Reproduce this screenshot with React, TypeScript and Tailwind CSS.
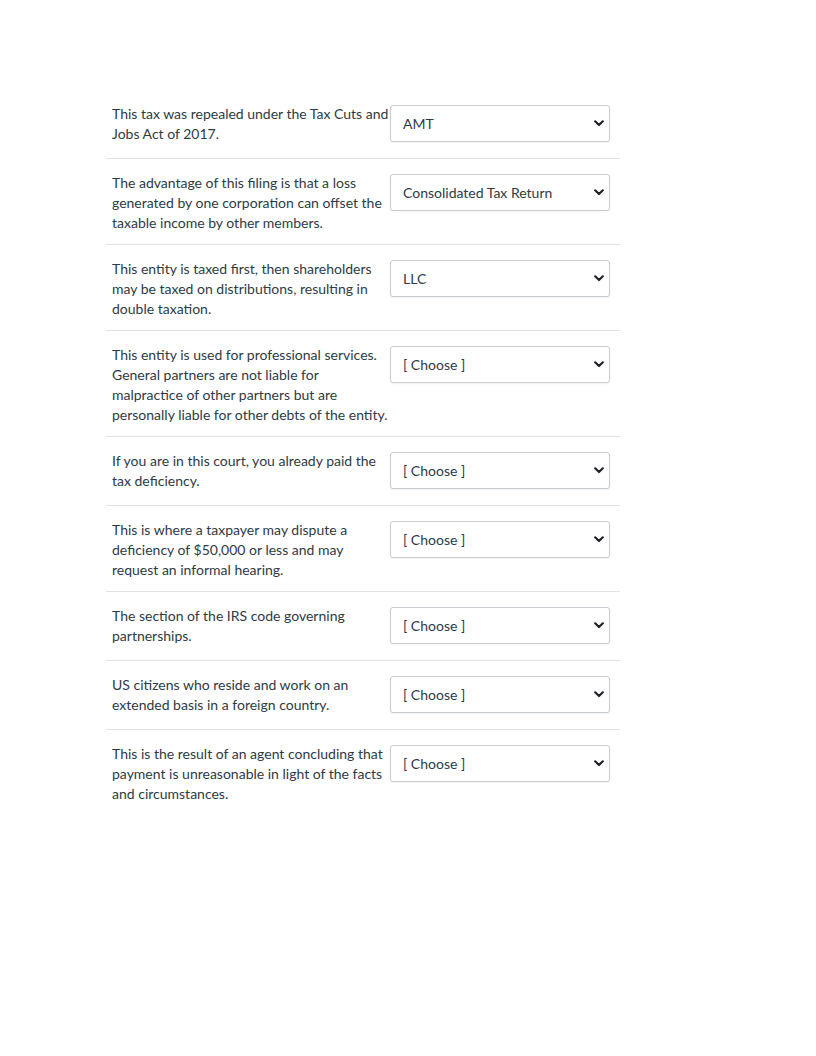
import React from 'react';

interface Item {
  lines: string[];
  answer: string;
}

const items: Item[] = [
  { lines: ['This tax was repealed under the Tax Cuts and', 'Jobs Act of 2017.'], answer: 'AMT' },
  {
    lines: ['The advantage of this filing is that a loss', 'generated by one corporation can offset the', 'taxable income by other members.'],
    answer: 'Consolidated Tax Return',
  },
  {
    lines: ['This entity is taxed first, then shareholders', 'may be taxed on distributions, resulting in', 'double taxation.'],
    answer: 'LLC',
  },
  {
    lines: [
      'This entity is used for professional services.',
      'General partners are not liable for',
      'malpractice of other partners but are',
      'personally liable for other debts of the entity.',
    ],
    answer: '[ Choose ]',
  },
  { lines: ['If you are in this court, you already paid the', 'tax deficiency.'], answer: '[ Choose ]' },
  {
    lines: ['This is where a taxpayer may dispute a', 'deficiency of $50,000 or less and may', 'request an informal hearing.'],
    answer: '[ Choose ]',
  },
  { lines: ['The section of the IRS code governing', 'partnerships.'], answer: '[ Choose ]' },
  { lines: ['US citizens who reside and work on an', 'extended basis in a foreign country.'], answer: '[ Choose ]' },
  {
    lines: ['This is the result of an agent concluding that', 'payment is unreasonable in light of the facts', 'and circumstances.'],
    answer: '[ Choose ]',
  },
];

function Chevron() {
  return (
    <svg width="10" height="7" viewBox="0 0 10 7" className="shrink-0">
      <path d="M1.2 1.3 L5 5 L8.8 1.3" fill="none" stroke="#1f2328" strokeWidth="2.2" strokeLinecap="round" strokeLinejoin="round" />
    </svg>
  );
}

function FakeSelect({ value }: { value: string }) {
  return (
    <div className="mt-px mb-[5px] flex h-[37px] w-[220px] shrink-0 items-center justify-between rounded-[3px] border border-[#c7cdd1] bg-white pl-[12px] pr-[5px] shadow-[0_1px_2px_rgba(0,0,0,0.06)]">
      <span className="text-[14px] leading-5 text-[#2d3b45]">{value}</span>
      <Chevron />
    </div>
  );
}

export default function App() {
  return (
    <div className="min-h-[1056px] w-[816px] bg-white pt-[90px] font-['Lato','Liberation_Sans',sans-serif]">
      <div className="ml-[106px] w-[514px]">
        {items.map((item, i) => (
          <div
            key={i}
            className={`flex pl-[6px] pt-[14px] pb-[11px] ${i < items.length - 1 ? 'border-b border-[#e1e4e6]' : ''}`}
          >
            <div className="w-[278px] shrink-0 text-[14px] leading-5 text-[#2d3b45]">
              {item.lines.map((l, j) => (
                <div key={j} className="whitespace-nowrap">
                  {l}
                </div>
              ))}
            </div>
            <FakeSelect value={item.answer} />
          </div>
        ))}
      </div>
    </div>
  );
}
